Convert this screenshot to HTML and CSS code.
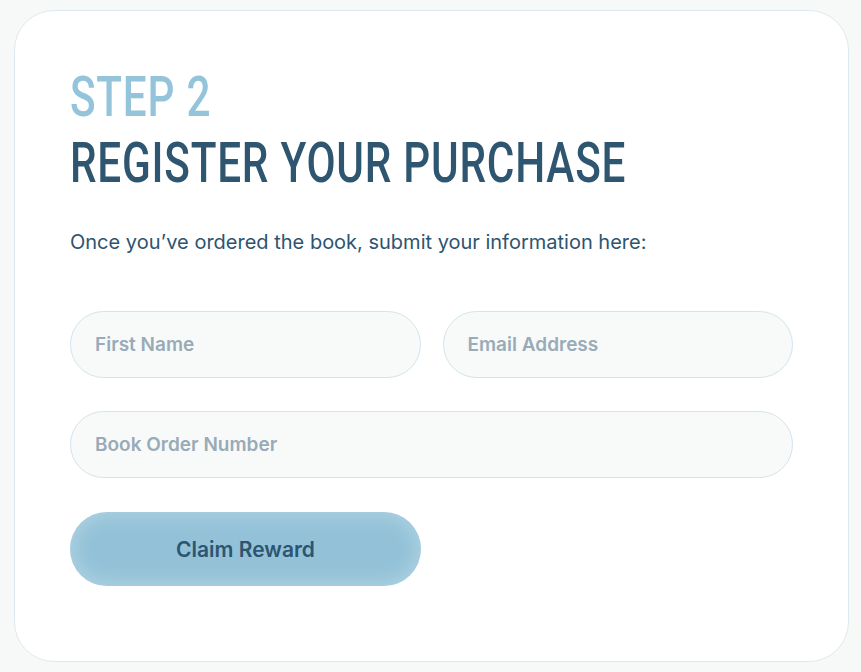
FILE: index.html
```html
<!DOCTYPE html>
<html lang="en">
<head>
<meta charset="utf-8">
<title>Register your purchase</title>
<link rel="stylesheet" href="styles.css">
</head>
<body>
<main class="card">
  <h1 class="title">
    <span class="step">STEP 2</span>
    <span class="main">REGISTER YOUR PURCHASE</span>
  </h1>
  <p class="lead">Once you’ve ordered the book, submit your information here:</p>
  <form class="form">
    <div class="row two">
      <input class="field" type="text" placeholder="First Name">
      <input class="field" type="email" placeholder="Email Address">
    </div>
    <div class="row">
      <input class="field" type="text" placeholder="Book Order Number">
    </div>
    <button class="btn" type="button">Claim Reward</button>
  </form>
</main>
</body>
</html>
```

FILE: styles.css
```css
* { box-sizing: border-box; }
html, body { margin: 0; height: 100%; }
body {
  background: #f7f9f9;
  padding: 10px 12px 0 14px;
  font-family: Inter, "Noto Sans", sans-serif;
}
.card {
  background: #fff;
  border: 1px solid #dde9f1;
  border-radius: 40px;
  height: 652px;
  padding: 55px 55px;
}
.title {
  margin: 0;
  font-family: Roboto, sans-serif;
  font-weight: 500;
  display: flex;
  flex-direction: column;
  align-items: flex-start;
  white-space: nowrap;
}
.step, .main {
  display: inline-block;
  transform: scaleX(0.755);
  transform-origin: left center;
  font-size: 56px;
  letter-spacing: 1px;
}
.step { color: #94c4da; line-height: 62px; }
.main { color: #2f5670; line-height: 70px; }
.lead {
  margin: 30px 0 0;
  color: #2d5470;
  font-size: 20px;
  line-height: 28px;
  font-weight: 430;
}
.form { margin-top: 55px; display: flex; flex-direction: column; gap: 33px; }
.row { display: flex; gap: 22px; }
.field {
  flex: 1;
  height: 67px;
  border: 1px solid #d2e4ee;
  border-radius: 34px;
  background: #f8fafa;
  padding: 0 24px;
  font-family: Inter, sans-serif;
  font-size: 19px;
  font-weight: 600;
  color: #2d5470;
}
.field::placeholder { color: #98abb7; }
.btn {
  width: 351px;
  height: 74px;
  margin-top: 1px;
  border: none;
  border-radius: 37px;
  background: #93c2d8;
  box-shadow: inset 0 0 18px 4px rgba(255,255,255,0.25);
  font-family: Inter, sans-serif;
  font-size: 21px;
  font-weight: 600;
  color: #2d5470;
}
```
